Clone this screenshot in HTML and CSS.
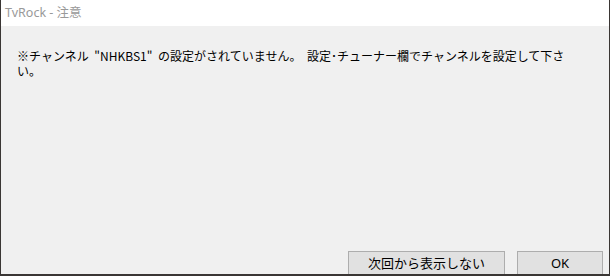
FILE: index.html
```html
<!DOCTYPE html>
<html lang="ja">
<head>
<meta charset="utf-8">
<title>TvRock - 注意</title>
<link rel="stylesheet" href="styles.css">
</head>
<body>
<div class="window">
  <div class="titlebar"><span class="title">TvRock - 注意</span></div>
  <div class="content">
    <p class="message">※チャンネル "NHKBS1" の設定がされていません。 設定･チューナー欄でチャンネルを設定して下さい。</p>
    <div class="footer">
      <button class="btn btn-wide">次回から表示しない</button>
      <button class="btn btn-ok">OK</button>
    </div>
  </div>
</div>
</body>
</html>
```

FILE: styles.css
```css
html, body {
  margin: 0;
  padding: 0;
}
body {
  width: 610px;
  height: 276px;
  background: #3a3634;
  overflow: hidden;
}
.window {
  margin-left: 1px;
  width: 608px;
  height: 274px;
  background: #f0f0f0;
  display: flex;
  flex-direction: column;
  overflow: hidden;
}
.titlebar {
  height: 26px;
  background: #ffffff;
  display: flex;
  align-items: center;
  padding-left: 4px;
  flex: none;
}
.title {
  font-family: "Noto Sans", "Noto Sans CJK JP", sans-serif;
  font-size: 12.5px;
  color: #999999;
  line-height: 16px;
  margin-top: -1px;
}
.content {
  flex: 1;
  display: flex;
  flex-direction: column;
  padding: 22px 0 0 16px;
}
.message {
  margin: 0;
  width: 571px;
  font-family: "Noto Sans CJK JP", sans-serif;
  font-size: 12px;
  line-height: 15px;
  word-spacing: 3px;
  color: #000000;
}
.footer {
  margin-top: auto;
  height: 23px;
  display: flex;
  justify-content: flex-end;
  align-items: flex-start;
  gap: 12px;
  padding-right: 6px;
  overflow: hidden;
}
.btn {
  box-sizing: border-box;
  height: 27px;
  margin: 0;
  border: 1px solid #adadad;
  background: #e1e1e1;
  color: #000000;
  padding: 3px 0 0 0;
  display: flex;
  justify-content: center;
  align-items: flex-start;
  flex: none;
}
.btn-wide {
  width: 157px;
  font-family: "Noto Sans CJK JP", sans-serif;
  font-size: 13px;
  line-height: 16px;
}
.btn-ok {
  width: 86px;
  font-family: "Noto Sans", sans-serif;
  font-size: 13px;
  line-height: 16px;
}
```
